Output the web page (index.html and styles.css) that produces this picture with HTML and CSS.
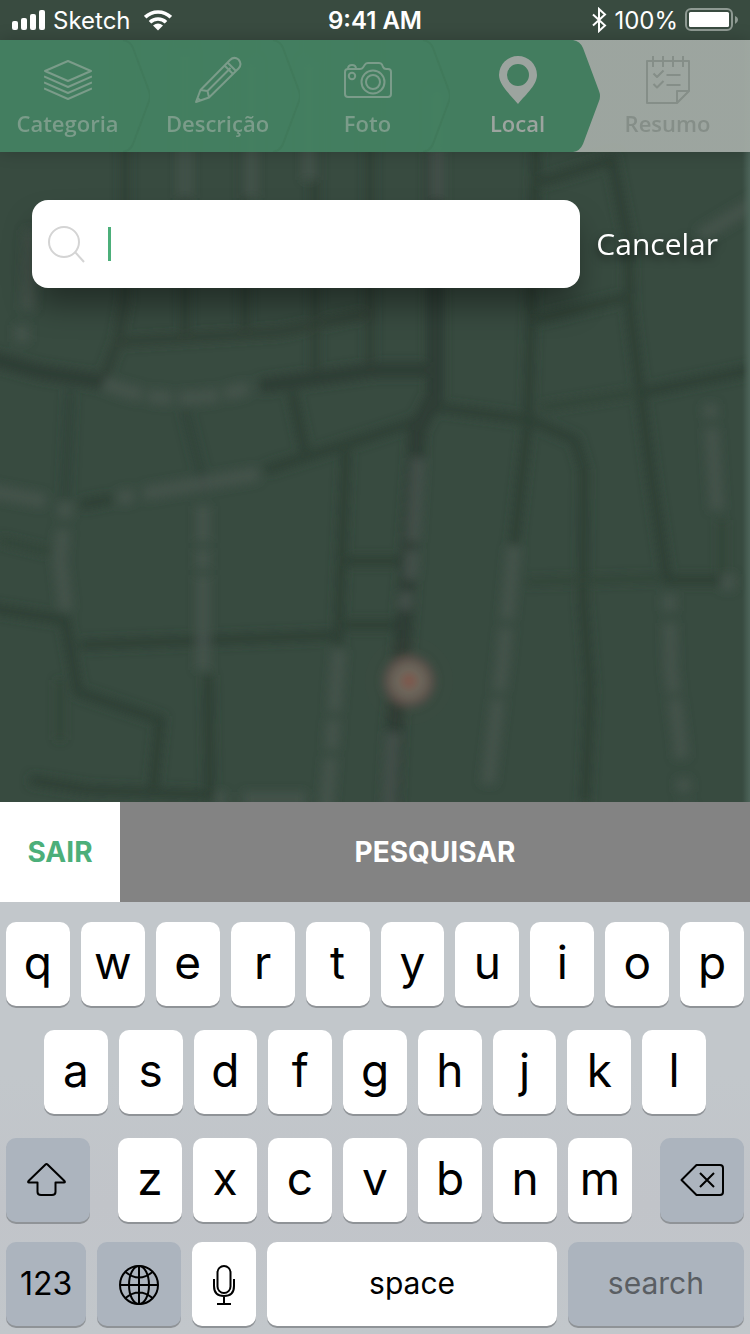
FILE: index.html
```html
<!DOCTYPE html>
<html lang="pt-BR">
<head>
<meta charset="utf-8">
<meta name="viewport" content="width=device-width, initial-scale=1">
<title>Local</title>
<link rel="stylesheet" href="styles.css">
</head>
<body>
<div class="app">
  <svg class="map" viewBox="0 0 750 802" preserveAspectRatio="xMidYMin slice" aria-hidden="true">
    <defs>
      <filter id="soft" x="-5%" y="-5%" width="110%" height="110%"><feGaussianBlur stdDeviation="5"/></filter>
      <linearGradient id="edge"><stop offset="0" stop-color="#4d6459" stop-opacity="0"/><stop offset="1" stop-color="#4d6459"/></linearGradient>
    </defs>
    <rect width="750" height="802" fill="#384b40"/>
    <g filter="url(#soft)" fill="none">
      <g stroke="#2f3f35" stroke-width="10">
        <path d="M125 0V300L118 340L104 378M185 0V335M245 0V335M315 0V370M370 0V370M120 342L280 332L375 312" opacity=".8"/>
        <path d="M70 390L65 500M185 410L205 490" opacity=".6"/>
        <path d="M292 392L305 452M265 470L375 435L420 420M346 450L338 645M80 505L112 499"/>
        <path d="M435 407L530 420L575 440L584 470L583 600L590 690L585 802M536 0L536 150L528 420L514 545"/>
        <path d="M540 182L612 160L628 240L630 310L640 390L652 480L667 580H722M535 320L628 297M640 393L760 368"/>
        <path d="M-10 608L65 620L78 692L160 720L153 790M30 780L90 790L210 795M208 675L210 802M80 645L340 635M345 561H410M345 625H410"/>
      </g>
      <path stroke="#2f3e34" stroke-width="15" d="M-10 358L40 372L104 382M260 386L375 370H430"/>
      <path stroke="#2f3e34" stroke-width="18" d="M435 150V395L417 430L415 470L403 640L395 720L390 820"/>
      <path stroke="#334439" stroke-width="7" d="M540 408L640 392M525 582L665 578M60 680V740M0 540L50 552M722 520V580"/>
      <g stroke="#4a5650" stroke-width="14" opacity=".72">
        <path stroke-dasharray="40 6 24 7" d="M104 383Q170 412 256 386"/>
        <path stroke-dasharray="16 10 150" d="M118 498L258 474"/>
        <path d="M-15 490L45 501M310 60V180M185 50V198M250 60V198M437 90V200"/>
        <path stroke-dasharray="16 12 90" d="M66 502L60 560L66 610"/>
        <path stroke-dasharray="36 7 20 7 110" d="M203 506V670"/>
        <path stroke-dasharray="84 8 30 12" d="M418 458L411 570L404 610"/>
        <path stroke-dasharray="74 8 64 8 100" d="M514 546L503 660L488 784"/>
        <path stroke-dasharray="16 12 70 6 60 20 14 12" d="M669 595L671 670L680 740L686 812"/>
        <path stroke-dasharray="62 8 30 8" d="M339 650L332 740L326 812"/>
        <path d="M393 732L389 812M700 236L760 200M215 799H226M243 799H306"/>
        <path stroke-dasharray="14 10 90" d="M710 404L717 510"/>
        <path d="M728 574V590M31 230L28 310M22 325V342"/>
      </g>
      <circle cx="409" cy="681" r="25" fill="#62544d"/>
      <circle cx="409" cy="681" r="17" fill="#6c6a5f"/>
      <circle cx="409" cy="681" r="8" fill="#80564c"/>
    </g>
    <circle cx="409" cy="681" r="44" fill="#725748" fill-opacity=".04"/>
    <rect x="742" width="8" height="802" fill="url(#edge)"/>
  </svg>

  <header class="status">
    <div class="status-left">
      <svg width="34" height="22" viewBox="0 0 34 22" fill="#fff" aria-hidden="true"><rect y="12" width="6" height="9" rx="2"/><rect x="9" y="9" width="6" height="12" rx="2"/><rect x="18" y="5" width="6" height="16" rx="2"/><rect x="27" y="1" width="6" height="20" rx="2"/></svg>
      <span>Sketch</span>
      <svg class="wifi" width="28" height="21" viewBox="0 0 28 21" fill="none" stroke="#fff" stroke-width="3.6" aria-hidden="true"><path d="M1.2 7.2A18.4 18.4 0 0 1 26.8 7.2M6 12.2A11.5 11.5 0 0 1 22 12.2"/><path fill="#fff" stroke="none" d="M14 20.5L9 15.6Q14 11.6 19 15.6Z"/></svg>
    </div>
    <time class="clock">9:41 AM</time>
    <div class="status-right">
      <svg width="16" height="26" viewBox="0 0 16 26" fill="none" stroke="#fff" stroke-width="2" aria-hidden="true"><path d="M2 7.5L14 18.5L8 24V2L14 7.5L2 18.5"/></svg>
      <span>100%</span>
      <svg width="53" height="24" viewBox="0 0 53 24" aria-hidden="true"><rect x="1" y="1" width="46" height="21" rx="5" fill="none" stroke="#8f9a93" stroke-width="2"/><rect x="4" y="4" width="40" height="15" rx="1.500" fill="#fff"/><path d="M50 8Q53 9 53 12Q53 14 50 16Z" fill="#8f9a93"/></svg>
    </div>
  </header>

  <nav class="steps" aria-label="Etapas">
    <a class="step done" href="#categoria">
      <svg class="shape" viewBox="0 0 150 112" preserveAspectRatio="none" aria-hidden="true"><path d="M123 0Q130 1 133 8L149 51Q151 56 149 61L133 104Q130 111 123 112"/></svg>
      <svg class="icon" viewBox="0 0 48 48" aria-hidden="true"><path d="M1 15L24 5L47 15L24 25ZM0 20.500L24 31L48 20.500M0 26.500L24 37L48 26.500M0 32.500L24 43L48 32.500"/></svg>
      <span>Categoria</span>
    </a>
    <a class="step done" href="#descricao">
      <svg class="shape" viewBox="0 0 150 112" preserveAspectRatio="none" aria-hidden="true"><path d="M123 0Q130 1 133 8L149 51Q151 56 149 61L133 104Q130 111 123 112"/></svg>
      <svg class="icon" viewBox="0 0 48 48" aria-hidden="true"><path d="M6.500 34L36 4Q40 0 44.500 3.500Q48.500 8 44.500 12.500L15 41.500L2 46ZM6.500 34L13.500 35L15 41.500M13.500 35L36.500 12M30.500 9.500L39.500 18.500M33.500 6.500L42 15M3.500 42L6.500 44.500"/></svg>
      <span>Descrição</span>
    </a>
    <a class="step done" href="#foto">
      <svg class="shape" viewBox="0 0 150 112" preserveAspectRatio="none" aria-hidden="true"><path d="M123 0Q130 1 133 8L149 51Q151 56 149 61L133 104Q130 111 123 112"/></svg>
      <svg class="icon" viewBox="0 0 48 48" aria-hidden="true"><path d="M4 13H16Q18 13 19 11.500L21 8.500Q22 7 24 7H35Q37 7 38 8.500L39 11Q40 13 42 13H44Q47 13 47 16V38Q47 41 44 41H4Q1 41 1 38V16Q1 13 4 13ZM4 13Q4 9 8 9Q12 9 12 13"/><circle cx="8" cy="20" r="3.200"/><circle cx="29" cy="26" r="11.500"/><circle cx="29" cy="26" r="7"/></svg>
      <span>Foto</span>
    </a>
    <a class="step current" href="#local" aria-current="step">
      <svg class="shape" viewBox="0 0 150 112" preserveAspectRatio="none" aria-hidden="true"><path d="M0 0H123Q130 1 133 8L149 51Q151 56 149 61L133 104Q130 111 123 112H0Z"/></svg>
      <svg class="icon" viewBox="0 0 48 48" aria-hidden="true"><path fill-rule="evenodd" d="M24 48C19 41 5 30 5 19A19 19 0 0 1 43 19C43 30 29 41 24 48ZM24 8A11 11 0 1 0 24 30A11 11 0 1 0 24 8Z"/></svg>
      <span>Local</span>
    </a>
    <a class="step next" href="#resumo">
      <svg class="icon" viewBox="0 0 48 48" aria-hidden="true"><path d="M3 5H45V35L33 47H3ZM33 47V35H45M9 0V11M19 0V11M29 0V11M39 0V11M9.500 17.500L13 21L19.500 14.500M9.500 28L13 31.500L19.500 25M22.500 19H36.500M22.500 29H36.500"/></svg>
      <span>Resumo</span>
    </a>
  </nav>

  <main class="content">
    <form class="search">
      <label class="field">
        <svg width="38" height="38" viewBox="0 0 38 38" fill="none" stroke="#d4d4d4" stroke-width="2" aria-hidden="true"><circle cx="16" cy="17" r="15"/><path d="M27 27L36 37"/></svg>
        <span class="caret"></span>
        <input type="text" aria-label="Pesquisar local">
      </label>
      <button class="cancel" type="button">Cancelar</button>
    </form>
  </main>

  <div class="actions">
    <button class="exit" type="button">SAIR</button>
    <button class="submit" type="button">PESQUISAR</button>
  </div>

  <section class="keyboard" aria-label="Teclado">
    <div class="row">
      <button class="key">q</button><button class="key">w</button><button class="key">e</button><button class="key">r</button><button class="key">t</button><button class="key">y</button><button class="key">u</button><button class="key">i</button><button class="key">o</button><button class="key">p</button>
    </div>
    <div class="row inset">
      <button class="key">a</button><button class="key">s</button><button class="key">d</button><button class="key">f</button><button class="key">g</button><button class="key">h</button><button class="key">j</button><button class="key">k</button><button class="key">l</button>
    </div>
    <div class="row wide-gap">
      <button class="key dark side" aria-label="Shift"><svg width="44" height="36" viewBox="0 0 44 36"><path d="M19.500 2.500Q20.500 1.500 21.500 2.500L38.500 19Q39.500 20.500 38 20.500H29.500V30Q29.500 33 26 33H15Q11.500 33 11.500 30V20.500H3Q1.500 20.500 2.500 19Z"/></svg></button>
      <div class="row letters">
        <button class="key">z</button><button class="key">x</button><button class="key">c</button><button class="key">v</button><button class="key">b</button><button class="key">n</button><button class="key">m</button>
      </div>
      <button class="key dark side" aria-label="Apagar"><svg width="44" height="36" viewBox="0 0 44 36"><path d="M16.500 3H40Q43 3 43 6V30Q43 33 40 33H16.500L1.500 18ZM20 11L34 25M34 11L20 25"/></svg></button>
    </div>
    <div class="row last">
      <button class="key dark numbers">123</button>
      <button class="key dark globe" aria-label="Idioma"><svg width="42" height="42" viewBox="0 0 42 42"><circle cx="21" cy="22" r="19"/><ellipse cx="21" cy="22" rx="10" ry="19"/><path d="M21 3V41M2 22H40M7.500 9Q21 20 34.500 9M7.500 35Q21 24 34.500 35"/></svg></button>
      <button class="key mic" aria-label="Ditado"><svg width="24" height="42" viewBox="0 0 24 42"><rect x="5.500" y="3" width="13" height="27" rx="6.500"/><path d="M2 16V23Q2 33 12 33Q22 33 22 23V16M12 33V41M5 41H19"/></svg></button>
      <button class="key word space">space</button>
      <button class="key dark word go">search</button>
    </div>
  </section>
</div>
</body>
</html>
```
FILE: styles.css
```css
* {
  box-sizing: border-box;
}

body {
  margin: 0;
  font-family: "Open Sans", "Noto Sans", sans-serif;
}

button {
  border: 0;
  padding: 0;
  margin: 0;
  background: none;
  font-family: inherit;
  cursor: pointer;
}

svg {
  display: block;
  flex: none;
}

.app {
  position: relative;
  display: flex;
  flex-direction: column;
  min-height: 100vh;
  overflow: hidden;
  background: #384b40;
}

.map {
  position: absolute;
  top: 0;
  left: 0;
  width: 100%;
}

/* Status bar */
.status {
  position: relative;
  display: grid;
  grid-template-columns: 1fr auto 1fr;
  align-items: center;
  height: 40px;
  padding: 0 12px;
  background: #394b40;
  color: #fff;
  font-family: Inter, sans-serif;
  font-size: 24px;
}

.status-left,
.status-right {
  display: flex;
  align-items: center;
  gap: 7px;
}

.status-right {
  justify-content: flex-end;
}

.wifi {
  margin-left: 6px;
}

.clock {
  font-weight: 600;
}

/* Steps */
.steps {
  position: relative;
  display: grid;
  grid-template-columns: repeat(5, 1fr);
  height: 112px;
  background: linear-gradient(to right, transparent 75%, rgba(163, 171, 165, 0.94) 75%);
  box-shadow: 0 0 16px rgba(0, 0, 0, 0.2);
}

.step {
  position: relative;
  display: flex;
  flex-direction: column;
  align-items: center;
  gap: 4px;
  padding: 16px 15px 0 0;
  font-size: 22px;
  font-weight: 600;
  line-height: 30px;
  text-decoration: none;
}

.shape {
  position: absolute;
  top: 0;
  left: 0;
  width: 100%;
  height: 100%;
}

.done {
  background: rgba(68, 130, 98, 0.94);
  color: #7b9c8a;
}

.done .shape {
  fill: none;
  stroke: #407759;
  stroke-opacity: 0.6;
  stroke-width: 2;
}

.current {
  color: #9ca49f;
}

.current .shape {
  fill: #437d5f;
}

.next {
  color: #858e88;
}

.icon {
  position: relative;
  width: 48px;
  height: 48px;
  fill: none;
  stroke: currentColor;
  stroke-width: 2;
  stroke-linejoin: round;
}

.current .icon {
  fill: currentColor;
  stroke: none;
}

.step span {
  position: relative;
}

/* Search */
.content {
  position: relative;
  flex: 1;
  padding: 48px 32px;
}

.search {
  display: flex;
  align-items: center;
  gap: 16px;
}

.field {
  display: flex;
  flex: 1;
  align-items: center;
  min-width: 0;
  height: 88px;
  padding: 0 16px;
  border-radius: 16px;
  background: #fff;
  box-shadow: 0 20px 32px -4px rgba(0, 0, 0, 0.4);
}

.caret {
  flex: none;
  width: 3px;
  height: 34px;
  margin-left: 22px;
  background: #4caf7a;
}

.field input {
  flex: 1;
  min-width: 0;
  height: 100%;
  padding: 0;
  border: 0;
  outline: 0;
  background: none;
  font: inherit;
  font-size: 30px;
}

.cancel {
  padding-bottom: 2px;
  color: #fff;
  font-size: 30px;
  text-shadow: 0 4px 8px rgba(0, 0, 0, 0.6);
}

/* Actions */
.actions {
  position: relative;
  display: flex;
  height: 100px;
  font-family: Inter, sans-serif;
  font-size: 28px;
}

.actions button {
  font-size: inherit;
  font-weight: 700;
}

.exit {
  flex: 0 0 120px;
  background: #fff;
  color: #4caf7a;
}

.submit {
  flex: 1;
  background: #838383;
  color: #fff;
}

/* Keyboard */
.keyboard {
  position: relative;
  display: flex;
  flex-direction: column;
  gap: 24px;
  padding: 20px 6px 8px;
  background: linear-gradient(to bottom, #c2c7cb 40%, #c1c4c9 70%, #c2c7cb);
  font-family: Inter, sans-serif;
}

.row {
  display: flex;
  gap: 11px;
}

.inset {
  padding: 0 38px;
}

.wide-gap {
  gap: 28px;
}

.letters {
  flex: 514;
}

.last {
  margin-top: -4px;
}

.key {
  display: flex;
  flex: 1 1 0;
  align-items: center;
  justify-content: center;
  min-width: 0;
  height: 84px;
  padding-bottom: 4px;
  border-radius: 10px;
  background: #fff;
  box-shadow: 0 2px 0 #8f9397;
  color: #000;
  font-size: 46px;
}

.key svg {
  fill: none;
  stroke: #000;
  stroke-width: 2;
  stroke-linejoin: round;
}

.dark {
  background: #acb4be;
}

.side {
  flex-grow: 84;
  padding-bottom: 0;
}

.word {
  padding-bottom: 2px;
  font-size: 30px;
}

.numbers {
  flex-grow: 80;
  padding-bottom: 2px;
  font-size: 32px;
}

.globe {
  flex-grow: 84;
  padding-bottom: 0;
}

.mic {
  flex-grow: 64;
  padding-bottom: 0;
}

.space {
  flex-grow: 289;
}

.go {
  flex-grow: 176;
  color: #5a5e63;
}
```
